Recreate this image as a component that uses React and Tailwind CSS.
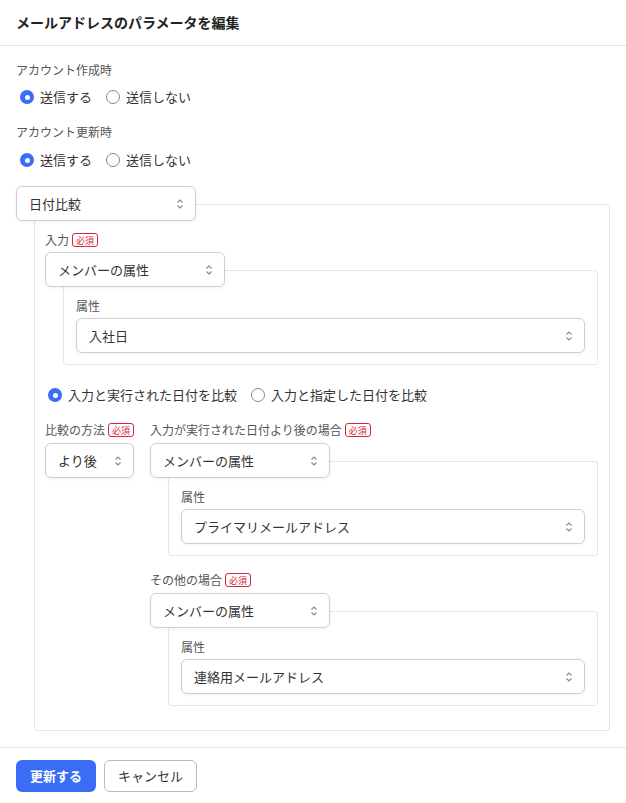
import React from "react";

const font = { fontFamily: '"Noto Sans CJK JP", "Noto Sans", sans-serif' };

function Chevron() {
  return (
    <svg width="8" height="12" viewBox="0 0 8 12" className="shrink-0">
      <polyline points="1.5,4.5 4,2 6.5,4.5" fill="none" stroke="#888" strokeWidth="1.1" />
      <polyline points="1.5,7.5 4,10 6.5,7.5" fill="none" stroke="#888" strokeWidth="1.1" />
    </svg>
  );
}

function Select({ value, className = "" }) {
  return (
    <div
      className={
        "relative z-10 flex h-[35px] items-center justify-between rounded-md border border-[#cfcfcf] bg-white pl-3 pr-[11px] text-[13px] text-[#333] shadow-[0_1px_4px_rgba(0,0,0,0.05)] " +
        className
      }
    >
      <span>{value}</span>
      <Chevron />
    </div>
  );
}

function Badge() {
  return (
    <span className="ml-[3px] inline-flex h-[14px] shrink-0 items-center whitespace-nowrap rounded-[3px] border border-[#d7263d] px-[3px] text-[9px] leading-none text-[#d7263d]">
      必須
    </span>
  );
}

function Label({ text, required }) {
  return (
    <div className="flex h-[18px] items-center whitespace-nowrap text-[12px] text-[#555]">
      <span>{text}</span>
      {required && <Badge />}
    </div>
  );
}

function Radio({ checked, label }) {
  return (
    <label className="flex items-center gap-[6px] text-[13px] text-[#333]">
      {checked ? (
        <span className="flex h-[14px] w-[14px] items-center justify-center rounded-full bg-[#3b6cf5]">
          <span className="h-[5px] w-[5px] rounded-full bg-white" />
        </span>
      ) : (
        <span className="h-[14px] w-[14px] rounded-full border-[1.5px] border-[#888]" />
      )}
      <span>{label}</span>
    </label>
  );
}

function AttrBlock({ select, attr }) {
  return (
    <div>
      <Select value={select} className="w-[180px]" />
      <div className="-mt-[17px] ml-[18px] rounded-sm border border-dotted border-[#cfcfcf] px-3 pt-[26px] pb-[11px]">
        <Label text="属性" />
        <Select value={attr} className="mt-[3px]" />
      </div>
    </div>
  );
}

export default function App() {
  return (
    <div className="w-[626px] bg-white" style={font}>
      <div className="flex h-[46px] items-center border-b border-[#e3e3e3] px-4 text-[14px] font-bold text-[#222]">
        メールアドレスのパラメータを編集
      </div>

      <div className="px-4 pt-[15px] pb-4">
        <Label text="アカウント作成時" />
        <div className="mt-2 flex h-[20px] items-center gap-[14px] pl-1">
          <Radio checked label="送信する" />
          <Radio label="送信しない" />
        </div>

        <div className="mt-4">
          <Label text="アカウント更新時" />
        </div>
        <div className="mt-[9px] flex h-[20px] items-center gap-[14px] pl-1">
          <Radio checked label="送信する" />
          <Radio label="送信しない" />
        </div>

        <div className="mt-4">
          <Select value="日付比較" className="w-[180px]" />
          <div className="-mt-[17px] ml-[18px] rounded-sm border border-dotted border-[#cfcfcf] pl-[10px] pr-[11px] pt-[26px] pb-[24px]">
            <Label text="入力" required />
            <div className="mt-[3px]">
              <AttrBlock select="メンバーの属性" attr="入社日" />
            </div>

            <div className="mt-5 flex h-[20px] items-center gap-[14px] pl-[3px]">
              <Radio checked label="入力と実行された日付を比較" />
              <Radio label="入力と指定した日付を比較" />
            </div>

            <div className="mt-4 flex gap-4">
              <div className="w-[89px] shrink-0">
                <Label text="比較の方法" required />
                <Select value="より後" className="mt-[4px]" />
              </div>
              <div className="flex-1">
                <Label text="入力が実行された日付より後の場合" required />
                <div className="mt-[4px]">
                  <AttrBlock select="メンバーの属性" attr="プライマリメールアドレス" />
                </div>
                <div className="mt-[15px]">
                  <Label text="その他の場合" required />
                </div>
                <div className="mt-[4px]">
                  <AttrBlock select="メンバーの属性" attr="連絡用メールアドレス" />
                </div>
              </div>
            </div>
          </div>
        </div>
      </div>

      <div className="flex gap-2 border-t border-[#e3e3e3] px-4 pt-3 pb-[11px]">
        <button className="h-[32px] w-[80px] rounded-md bg-[#3b6cf5] text-[13px] font-bold text-white">
          更新する
        </button>
        <button className="h-[32px] w-[93px] rounded-md border border-[#bbb] bg-white text-[13px] text-[#333]">
          キャンセル
        </button>
      </div>
    </div>
  );
}
